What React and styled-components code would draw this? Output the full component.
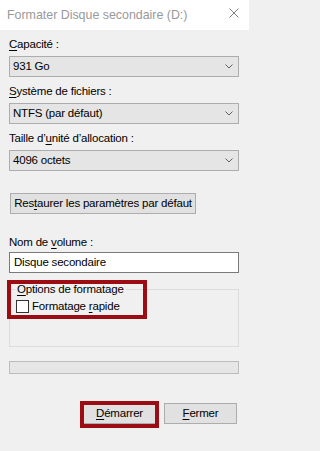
import React from "react";
import styled, { createGlobalStyle } from "styled-components";

const Global = createGlobalStyle`
  *, *::before, *::after { box-sizing: border-box; }
  html, body { margin: 0; padding: 0; background: #f0f0f0; }
  body {
    width: 249px;
    height: 451px;
    overflow: hidden;
    font-family: "Liberation Sans", Arial, sans-serif;
  }
`;

const Window = styled.div`
  position: relative;
  width: 249px;
  height: 451px;
  background: #f0f0f0;
  display: flex;
  flex-direction: column;
  font-size: 11.5px;
  letter-spacing: -0.2px;
  color: #000;
`;

const TitleBar = styled.div`
  height: 30px;
  flex: none;
  background: #ffffff;
  display: flex;
  align-items: center;
  justify-content: space-between;
  padding: 0 10px 0 7px;
`;

const Title = styled.span`
  font-size: 12.4px;
  letter-spacing: 0;
  color: #999999;
  line-height: 14px;
  margin-top: -1px;
`;

const CloseIcon = styled.svg`
  align-self: flex-start;
  margin-top: 8px;
  display: block;
`;

const Content = styled.div`
  display: flex;
  flex-direction: column;
  padding: 0 10px 0 9px;
`;

const Label = styled.div`
  height: 15px;
  line-height: 15px;
  margin-top: ${(p) => p.$top || 0}px;
  margin-bottom: ${(p) => p.$gap ?? 4}px;
  white-space: nowrap;
`;

const Key = styled.u`
  text-decoration: underline;
  text-decoration-thickness: 1px;
  text-underline-offset: 1.5px;
`;

const Select = styled.div`
  height: 21px;
  border: 1px solid #adadad;
  background: #e5e5e5;
  display: flex;
  align-items: center;
  justify-content: space-between;
  padding: 0 5px 0 3px;
  line-height: 19px;
`;

const Chevron = () => (
  <svg width="8" height="5" viewBox="0 0 8 5">
    <path d="M0.5 0.5 L4 4 L7.5 0.5" fill="none" stroke="#606060" strokeWidth="1" />
  </svg>
);

const Button = styled.div`
  width: ${(p) => p.$w}px;
  height: 21px;
  margin-top: ${(p) => p.$top || 0}px;
  margin-left: ${(p) => p.$left || 0}px;
  border: 1px solid #adadad;
  background: #e1e1e1;
  display: flex;
  align-items: center;
  justify-content: center;
  line-height: 19px;
  white-space: nowrap;
  flex: none;
`;

const TextInput = styled.div`
  height: 21px;
  border: 1px solid #7a7a7a;
  background: #ffffff;
  padding: 0 4px;
  line-height: 19px;
`;

const Group = styled.fieldset`
  margin: 9px 0 0 0;
  padding: 0 5px 32px 5px;
  border: 1px solid #dcdcdc;
  min-inline-size: 0;
`;

const Legend = styled.legend`
  padding: 0 2px;
  height: 15px;
  line-height: 15px;
`;

const CheckRow = styled.div`
  margin-top: 2px;
  height: 15px;
  display: flex;
  align-items: center;
  gap: 3px;
  line-height: 15px;
`;

const Box = styled.span`
  width: 13px;
  height: 13px;
  margin-left: 1px;
  border: 1px solid #333333;
  background: #ffffff;
  flex: none;
`;

const Progress = styled.div`
  margin-top: 14px;
  height: 13px;
  border: 1px solid #bcbcbc;
  background: #e6e6e6;
`;

const Actions = styled.div`
  margin-top: 29px;
  padding-right: 2px;
  display: flex;
  justify-content: flex-end;
  gap: 8px;
`;

const Highlight = styled.div`
  position: absolute;
  left: ${(p) => p.$x}px;
  top: ${(p) => p.$y}px;
  width: ${(p) => p.$w}px;
  height: ${(p) => p.$h}px;
  border: 4px solid #9b0d13;
  pointer-events: none;
`;

export default function App() {
  return (
    <>
      <Global />
      <Window>
        <TitleBar>
          <Title>Formater Disque secondaire (D:)</Title>
          <CloseIcon width="10" height="10" viewBox="0 0 10 10">
            <path d="M0.5 0.5 L9.5 9.5 M9.5 0.5 L0.5 9.5" stroke="#808080" strokeWidth="1" fill="none" />
          </CloseIcon>
        </TitleBar>
        <Content>
          <Label $top={7}>
            <Key>C</Key>apacité :
          </Label>
          <Select>
            <span>931 Go</span>
            <Chevron />
          </Select>

          <Label $top={7}>
            <Key>S</Key>ystème de fichiers :
          </Label>
          <Select>
            <span>NTFS (par défaut)</span>
            <Chevron />
          </Select>

          <Label $top={7}>
            Taille d’<Key>u</Key>nité d’allocation :
          </Label>
          <Select>
            <span>4096 octets</span>
            <Chevron />
          </Select>

          <Button $w={186} $top={22} $left={1}>
            <span>
              Res<Key>t</Key>aurer les paramètres par défaut
            </span>
          </Button>

          <Label $top={21} $gap={2}>
            Nom de <Key>v</Key>olume :
          </Label>
          <TextInput>Disque secondaire</TextInput>

          <Group>
            <Legend>
              <Key>O</Key>ptions de formatage
            </Legend>
            <CheckRow>
              <Box />
              <span>
                Formatage <Key>r</Key>apide
              </span>
            </CheckRow>
          </Group>

          <Progress />

          <Actions>
            <Button $w={73}>
              <span>
                <Key>D</Key>émarrer
              </span>
            </Button>
            <Button $w={73}>
              <span>
                <Key>F</Key>ermer
              </span>
            </Button>
          </Actions>
        </Content>

        <Highlight $x={7} $y={280} $w={140} $h={39} />
        <Highlight $x={80} $y={401} $w={79} $h={27} />
      </Window>
    </>
  );
}
